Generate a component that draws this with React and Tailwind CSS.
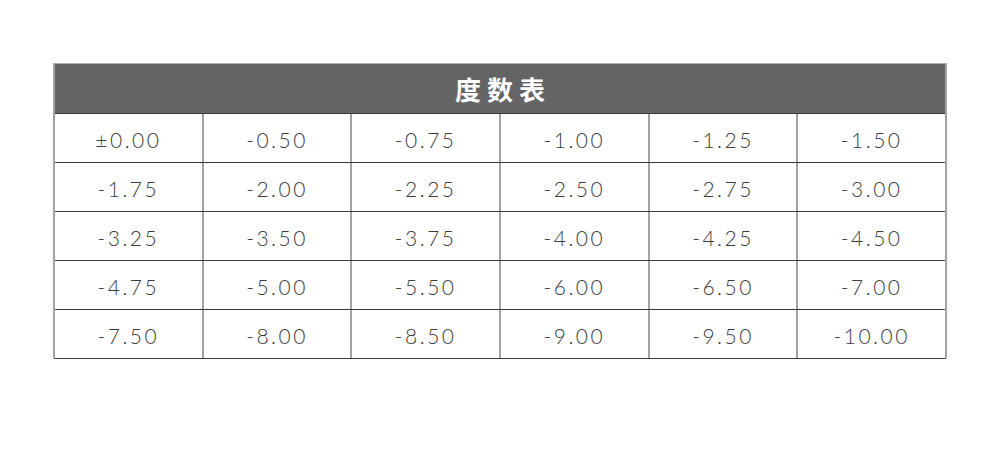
const rows = [
  ["±0.00", "-0.50", "-0.75", "-1.00", "-1.25", "-1.50"],
  ["-1.75", "-2.00", "-2.25", "-2.50", "-2.75", "-3.00"],
  ["-3.25", "-3.50", "-3.75", "-4.00", "-4.25", "-4.50"],
  ["-4.75", "-5.00", "-5.50", "-6.00", "-6.50", "-7.00"],
  ["-7.50", "-8.00", "-8.50", "-9.00", "-9.50", "-10.00"],
];

const App = () => {
  return (
    <div className="w-[1000px] h-[450px] bg-white pt-[63px] pl-[53px]">
      <div className="w-[894px] border-x-2 border-[#a3a3a3]">
        {/* Header */}
        <div
          className="h-[51px] bg-[#646464] border-t border-[#b0b0b0] border-b border-b-[#3a3a3a] flex items-center justify-center text-white text-[26px] font-semibold tracking-[6px] pl-[6px]"
          style={{ fontFamily: '"Noto Sans CJK SC", sans-serif' }}
        >
          度数表
        </div>

        {/* Rows */}
        {rows.map((row, i) => (
          <div key={i} className="flex h-[49px] border-b border-[#3a3a3a]">
            {row.map((val, j) => (
              <div
                key={j}
                className={
                  "flex-1 flex items-center justify-center pt-[3px] text-[21px] font-light text-[#3c3c3c] tracking-[2.5px] " +
                  (j < 5 ? "border-r-2 border-[#a3a3a3]" : "")
                }
                style={{ fontFamily: 'Lato, sans-serif' }}
              >
                {val}
              </div>
            ))}
          </div>
        ))}
      </div>
    </div>
  );
};

export default App;
